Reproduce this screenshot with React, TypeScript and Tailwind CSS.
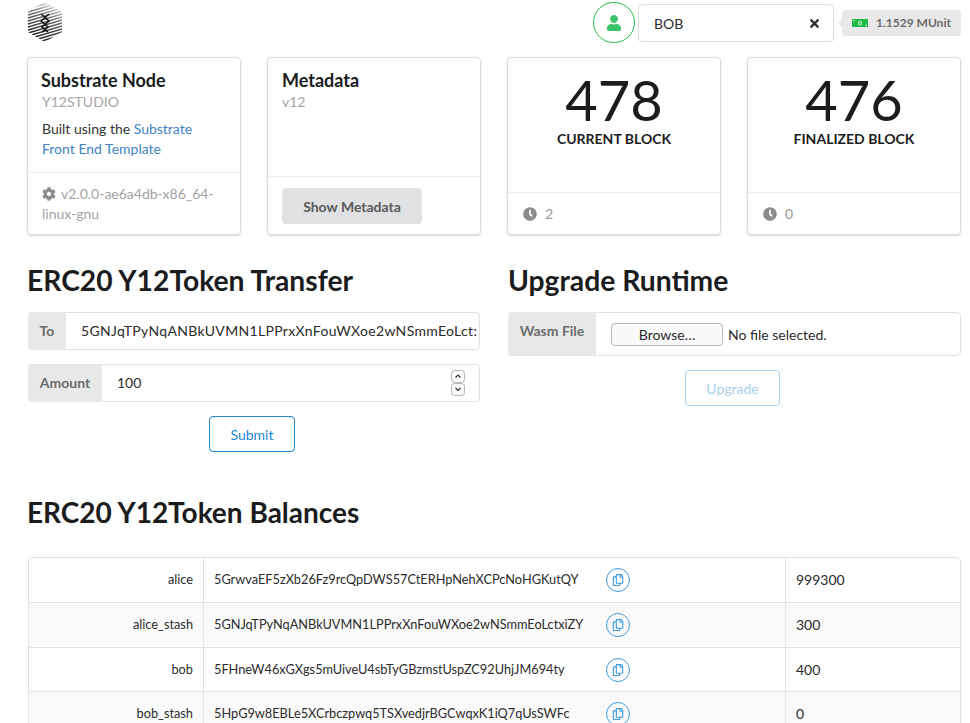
import { FaUser, FaTimes, FaCog, FaClock, FaRegCopy } from "react-icons/fa";

const balances = [
  { name: "alice", address: "5GrwvaEF5zXb26Fz9rcQpDWS57CtERHpNehXCPcNoHGKutQY", amount: "999300", h: "h-[44px]" },
  { name: "alice_stash", address: "5GNJqTPyNqANBkUVMN1LPPrxXnFouWXoe2wNSmmEoLctxiZY", amount: "300", h: "h-[45px]" },
  { name: "bob", address: "5FHneW46xGXgs5mUiveU4sbTyGBzmstUspZC92UhjJM694ty", amount: "400", h: "h-[44px]" },
  { name: "bob_stash", address: "5HpG9w8EBLe5XCrbczpwq5TSXvedjrBGCwqxK1iQ7qUsSWFc", amount: "0", h: "h-[45px]" },
];

function Logo() {
  const lines = [];
  for (let i = 0; i < 17; i++) {
    const y = -1 + i * 3;
    lines.push(<line key={i} x1="-2" y1={y + 10} x2="38" y2={y - 10 + 8} stroke="url(#fade)" strokeWidth="1.4" />);
  }
  return (
    <svg width="36" height="42" viewBox="0 0 36 42" className="block">
      <defs>
        <linearGradient id="fade" gradientUnits="userSpaceOnUse" x1="24" y1="2" x2="12" y2="34">
          <stop offset="0" stopColor="#dddddd" />
          <stop offset="0.45" stopColor="#666" />
          <stop offset="1" stopColor="#222" />
        </linearGradient>
        <clipPath id="hex">
          <polygon points="18,1 35,11 35,31 18,41 1,31 1,11" />
        </clipPath>
      </defs>
      <g clipPath="url(#hex)">{lines}</g>
      <path d="M14 13 L22 20 L15 26 L21 31 M22 13 L14 20 L21 26 L15 31" fill="none" stroke="#111" strokeWidth="1.5" />
    </svg>
  );
}

function BlockCard({ value, label, timer }: { value: string; label: string; timer: string }) {
  return (
    <div className="w-[214px] h-[178px] flex flex-col bg-white rounded border border-[#dcdcdc] shadow-[0_1px_2px_rgba(0,0,0,0.15)]">
      <div className="h-[135px] flex flex-col items-center pt-[12px] border-b border-[#eeeeee]">
        <div className="text-[56px] leading-[60px] text-[#1b1c1d]">{value}</div>
        <div className="text-[14px] leading-[18px] font-bold text-[#1b1c1d]">{label}</div>
      </div>
      <div className="flex-1 flex items-center gap-[8px] pl-[15px] text-[#999999] text-[14px]">
        <FaClock className="text-[14px] text-[#8c8c8c]" />
        <span>{timer}</span>
      </div>
    </div>
  );
}

export default function App() {
  return (
    <div className="h-[723px] overflow-hidden bg-white pl-[27px] text-[14px] text-[#212121] font-['Lato','Open_Sans',sans-serif]">
      {/* top menu */}
      <div className="w-[934px] h-[57px] flex items-start">
        <div className="pt-[1px]">
          <Logo />
        </div>
        <div className="ml-auto flex items-start pt-[2px]">
          <div className="w-[42px] h-[41px] rounded-full border border-[#21ba45] flex items-center justify-center text-[#3cc46a]">
            <FaUser className="text-[16px]" />
          </div>
          <div className="ml-[3px] mt-[2px] w-[196px] h-[38px] flex items-center rounded border border-[#dedede] pl-[15px] pr-[12px]">
            <span className="text-[#2b2b2b]">BOB</span>
            <FaTimes className="ml-auto text-[13px] text-[#333333]" />
          </div>
          <div className="relative ml-[8px] mt-[8px] w-[119px] h-[26px] flex items-center rounded bg-[#e8e8e8] pl-[10px] text-[12px] font-bold text-[#6b6b6b]">
            <span className="absolute left-[-3px] top-[10px] w-[6px] h-[6px] rotate-45 bg-[#e8e8e8]" />
            <svg width="16" height="8" viewBox="0 0 16 8" className="block">
              <rect width="16" height="8" fill="#21ba45" />
              <ellipse cx="8" cy="4" rx="2" ry="2.6" fill="#c8f0d4" />
              <rect x="7.4" y="2.5" width="1.2" height="3" fill="#21ba45" />
              <rect x="1" y="1" width="1.5" height="1.5" fill="#a8e6bb" />
              <rect x="13.5" y="5.5" width="1.5" height="1.5" fill="#a8e6bb" />
            </svg>
            <span className="ml-[8px]">1.1529 MUnit</span>
          </div>
        </div>
      </div>

      {/* cards */}
      <div className="flex gap-[26px]">
        <div className="w-[214px] h-[178px] flex flex-col rounded border border-[#dcdcdc] shadow-[0_1px_2px_rgba(0,0,0,0.15)]">
          <div className="h-[115px] px-[14px] pt-[11px] border-b border-[#eeeeee]">
            <div className="-ml-px text-[18px] leading-[23px] font-bold text-[#1b1c1d]">Substrate Node</div>
            <div className="leading-[20px] text-[#a6a6a6]">Y12STUDIO</div>
            <div className="mt-[7px] leading-[20px] text-[#333333]">
              Built using the <span className="text-[#4183c4]">Substrate Front End Template</span>
            </div>
          </div>
          <div className="px-[14px] pt-[11px] leading-[20px] text-[#a3a3a3]">
            <FaCog className="inline text-[14px] text-[#8c8c8c] mr-[5px] align-[-2px]" />
            v2.0.0-ae6a4db-x86_64-linux-gnu
          </div>
        </div>

        <div className="w-[214px] h-[178px] flex flex-col rounded border border-[#dcdcdc] shadow-[0_1px_2px_rgba(0,0,0,0.15)]">
          <div className="h-[119px] px-[14px] pt-[11px] border-b border-[#eeeeee]">
            <div className="text-[18px] leading-[23px] font-bold text-[#1b1c1d]">Metadata</div>
            <div className="leading-[20px] text-[#a6a6a6]">v12</div>
          </div>
          <div className="px-[14px] pt-[11px]">
            <div className="w-[140px] h-[36px] flex items-center justify-center rounded bg-[#e0e1e2] font-bold text-[#5a5a5a]">
              Show Metadata
            </div>
          </div>
        </div>

        <BlockCard value="478" label="CURRENT BLOCK" timer="2" />
        <BlockCard value="476" label="FINALIZED BLOCK" timer="0" />
      </div>

      {/* forms */}
      <div className="flex mt-[27px]">
        <div className="w-[452px] ml-[1px]">
          <h1 className="-ml-px text-[28.25px] leading-[36px] font-bold text-[#1b1c1d]">ERC20 Y12Token Transfer</h1>
          <div className="mt-[14px] flex h-[38px] rounded border border-[#e2e2e2]">
            <div className="w-[38px] -m-px mr-0 pb-[2px] rounded-l bg-[#e8e8e8] flex items-center justify-center font-bold text-[#6b6b6b]">
              To
            </div>
            <div className="flex-1 flex items-center pl-[15px] pb-[2px] overflow-hidden whitespace-nowrap tracking-[0.33px] text-[#2b2b2b]">
              5GNJqTPyNqANBkUVMN1LPPrxXnFouWXoe2wNSmmEoLct:
            </div>
          </div>
          <div className="mt-[14px] flex h-[38px] rounded border border-[#e2e2e2]">
            <div className="w-[74px] -m-px mr-0 pb-[2px] rounded-l bg-[#e8e8e8] flex items-center justify-center font-bold text-[#6b6b6b]">
              Amount
            </div>
            <div className="flex-1 flex items-center pl-[15px] pr-[14px] text-[#2b2b2b]">
              <span className="pb-[2px]">100</span>
              <div className="ml-auto flex flex-col">
                <svg width="14" height="13" viewBox="0 0 14 13" className="block">
                  <rect x="0.5" y="0.5" width="13" height="12" rx="3" fill="#fafafa" stroke="#b5b5b5" />
                  <path d="M4.5 7.5 L7 5 L9.5 7.5" fill="none" stroke="#333" strokeWidth="1.2" />
                </svg>
                <svg width="14" height="13" viewBox="0 0 14 13" className="block">
                  <rect x="0.5" y="0.5" width="13" height="12" rx="3" fill="#fafafa" stroke="#b5b5b5" />
                  <path d="M4.5 5 L7 7.5 L9.5 5" fill="none" stroke="#333" strokeWidth="1.2" />
                </svg>
              </div>
            </div>
          </div>
          <div className="mt-[14px] flex justify-center pr-[4px]">
            <div className="w-[86px] h-[36px] flex items-center justify-center rounded border border-[#2185d0] text-[#2185d0]">
              Submit
            </div>
          </div>
        </div>

        <div className="w-[453px] ml-[28px]">
          <h1 className="text-[28.25px] leading-[36px] font-bold text-[#1b1c1d]">Upgrade Runtime</h1>
          <div className="mt-[14px] flex h-[44px] rounded border border-[#e2e2e2]">
            <div className="w-[88px] -m-px mr-0 rounded-l bg-[#e8e8e8] pt-[8px] text-center font-bold text-[#6b6b6b]">
              Wasm File
            </div>
            <div className="flex-1 flex items-center pl-[15px] pt-[1px] text-[#2b2b2b]">
              <div className="w-[112px] h-[23px] flex items-center justify-center rounded border border-[#b8b8b8] bg-[#f9f9f9]">
                Browse…
              </div>
              <span className="ml-[5px]">No file selected.</span>
            </div>
          </div>
          <div className="mt-[14px] flex justify-center pr-[4px]">
            <div className="w-[95px] h-[36px] flex items-center justify-center rounded border border-[#a6cfed] text-[#a6cfed]">
              Upgrade
            </div>
          </div>
        </div>
      </div>

      {/* balances */}
      <h1 className="mt-[42px] text-[28px] leading-[36px] font-bold text-[#1b1c1d]">ERC20 Y12Token Balances</h1>
      <div className="mt-[27px] ml-[1px] w-[933px] rounded-t border border-[#e2e2e2] text-[#2b2b2b]">
        {balances.map((row, i) => (
          <div
            key={row.name}
            className={`flex ${row.h} ${i > 0 ? "border-t border-[#e2e2e2]" : ""} ${i % 2 === 1 ? "bg-[#fafafa]" : ""}`}
          >
            <div className="w-[175px] flex items-center justify-end pr-[10px] border-r border-[#e2e2e2] text-[12.75px]">{row.name}</div>
            <div className="w-[582px] flex items-center pl-[10px] border-r border-[#e2e2e2]">
              <span className="w-[392px] whitespace-nowrap text-[12.75px]">{row.address}</span>
              <div className="w-[24px] h-[24px] rounded-full border border-[#3f9ae0] flex items-center justify-center text-[#3f9ae0]">
                <FaRegCopy className="text-[12px]" />
              </div>
            </div>
            <div className="flex-1 flex items-center pl-[10px] pb-[1px]">{row.amount}</div>
          </div>
        ))}
      </div>
    </div>
  );
}
